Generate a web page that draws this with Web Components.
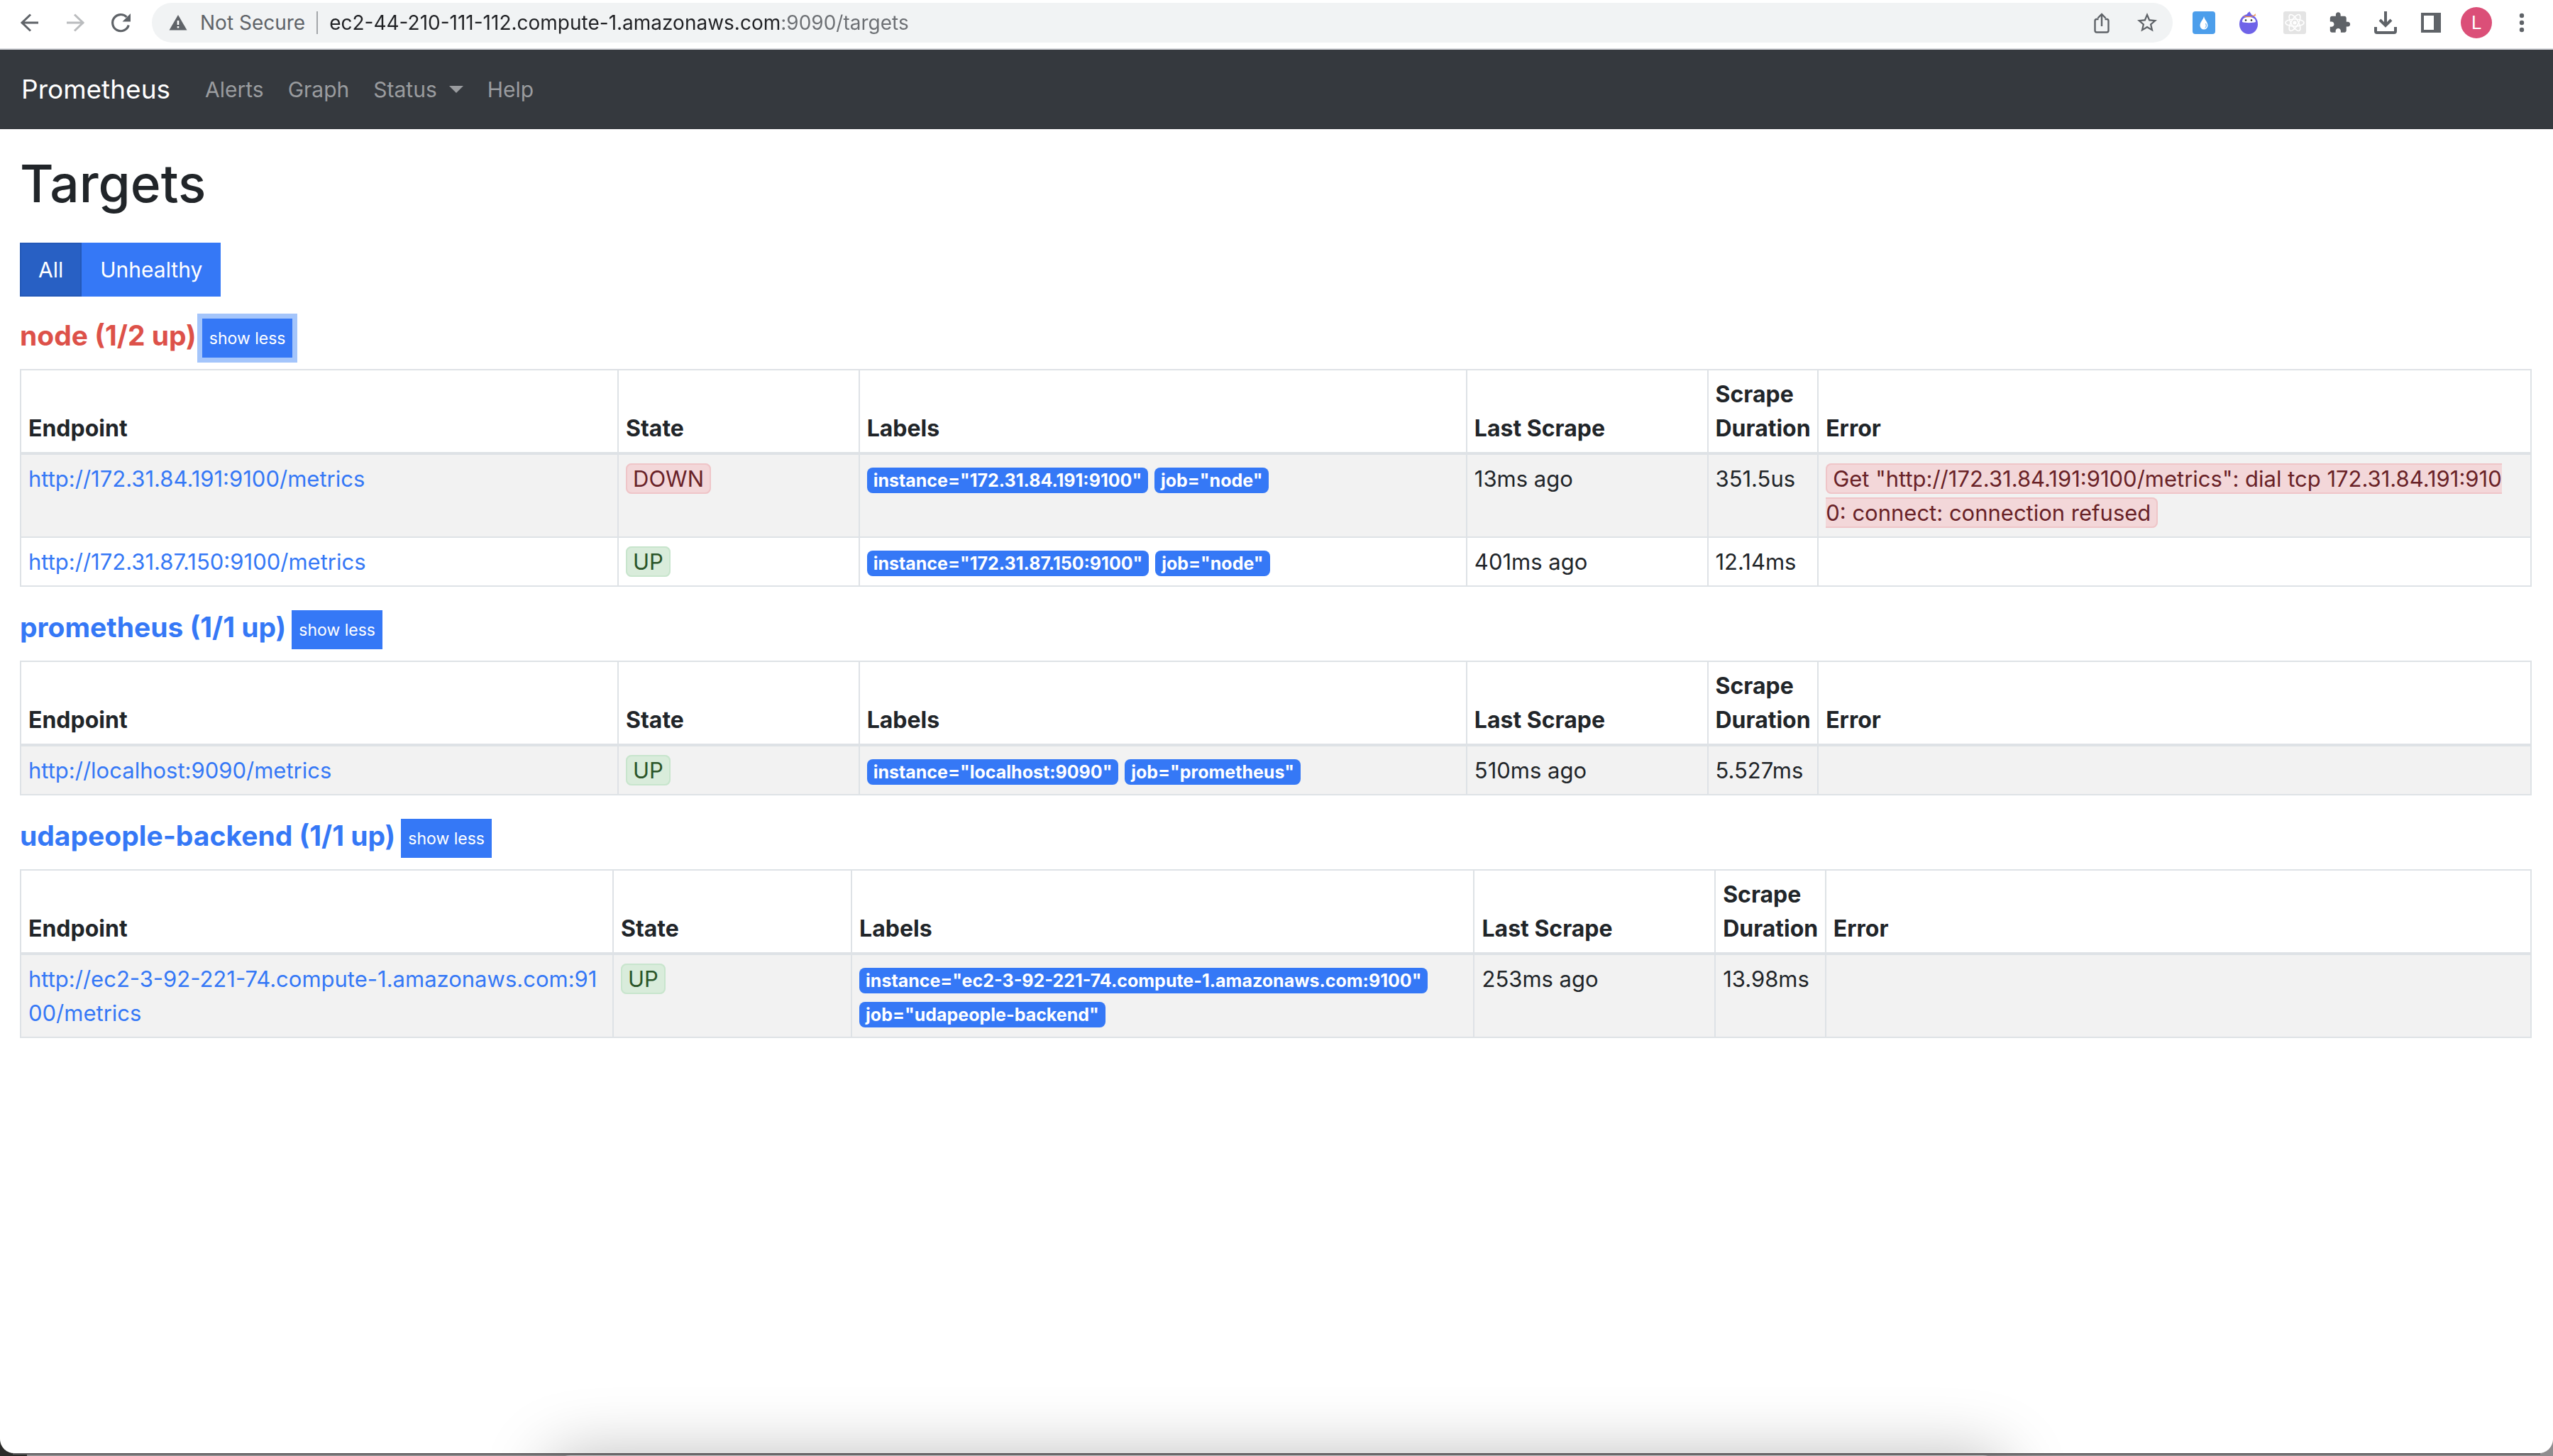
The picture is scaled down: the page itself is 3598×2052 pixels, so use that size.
<!DOCTYPE html>
<html lang="en">
<head>
<meta charset="utf-8">
<title>Prometheus Time Series Collection and Processing Server</title>
<style>
  body { margin: 0; background: #8f8d8f; color: #212529; font: 31px/48px Inter, "Liberation Sans", sans-serif; }
</style>
</head>
<body>
<desktop-stage>
  <browser-window>
    <browser-toolbar slot="toolbar"></browser-toolbar>
    <prom-navbar>
      <span slot="brand">Prometheus</span>
    </prom-navbar>
    <targets-page></targets-page>
  </browser-window>
</desktop-stage>

<script>
const define = (name, html, setup) => {
  const template = document.createElement('template');
  template.innerHTML = html;
  customElements.define(name, class extends HTMLElement {
    constructor() {
      super();
      this.attachShadow({ mode: 'open' }).append(template.content.cloneNode(true));
    }
    connectedCallback() { if (setup) setup(this, this.shadowRoot); }
  });
};

/* Desktop behind the window, with the dock peeking in at the bottom edge */
define('desktop-stage', `
  <style>
    :host { display: block; position: relative; box-sizing: border-box; min-height: 100vh; padding-bottom: 4px; overflow: hidden;
            background: linear-gradient(90deg, #2b2b29 38px, #8f8d8f 38px); }
    .edge { position: absolute; left: 18px; right: 18px; bottom: 2px; height: 2px; background: #5c5a5c; }
    .dock { position: absolute; left: 0; right: 0; bottom: -199px; width: 57%; height: 200px; margin: 0 auto;
            border-radius: 30px; background: #bdbdbd; box-shadow: 0 0 92px rgba(0, 0, 0, .27); }
  </style>
  <slot></slot>
  <div class="dock"></div>
  <div class="edge"></div>
`);

define('browser-window', `
  <style>
    :host { display: flex; flex-direction: column; min-height: calc(100vh - 4px); background: #fff;
            border-radius: 0 0 20px 20px; overflow: hidden; }
  </style>
  <slot name="toolbar"></slot>
  <slot></slot>
`);

const ICONS = {
  back: '<path d="M54 32H30.500M43 20.500L31 32l12 11.500" transform="translate(-10)" fill="none" stroke="currentColor" stroke-width="3"/>',
  forward: '<path d="M10 32h24M21 20.500L33 32 21 43.500" transform="translate(10)" fill="none" stroke="currentColor" stroke-width="3"/>',
  reload: '<path d="M43.300 35.500A11.600 11.600 0 1 1 40.500 24" fill="none" stroke="currentColor" stroke-width="3.200"/><path d="M46 19v11.500H34.500z" fill="currentColor"/>',
  share: '<path d="M27.500 27H25a2.500 2.500 0 0 0-2.500 2.500V43a2.500 2.500 0 0 0 2.500 2.500h14a2.500 2.500 0 0 0 2.500-2.500V29.500A2.500 2.500 0 0 0 39 27h-2.500M32 37V20M26.500 25.500L32 20l5.500 5.500" fill="none" stroke="currentColor" stroke-width="2.400"/>',
  star: '<path transform="translate(15.2 15.2) scale(1.4)" fill="currentColor" d="M22 9.240l-7.190-.620L12 2 9.190 8.630 2 9.240l5.460 4.730L5.820 21 12 17.270 18.180 21l-1.630-7.030L22 9.240zM12 15.400l-3.760 2.270 1-4.280-3.320-2.880 4.380-.380L12 6.100l1.710 4.040 4.380.380-3.320 2.880 1 4.280L12 15.400z"/>',
  drop: '<rect x="16" y="16" width="32" height="32" rx="4" fill="#4c9eeb"/><path d="M32 23c1 5 5.500 8 5.500 13a5.500 5.500 0 0 1-11 0c0-5 4.500-8 5.500-13z" fill="#fff"/><path d="M34.500 33c1.500 3 1 5-1 6.500" fill="none" stroke="#4c9eeb" stroke-width="1"/>',
  ninja: '<ellipse cx="31" cy="34" rx="13" ry="14" fill="#6f63e8"/><path d="M29 22c-1-3 1-4 4-6-1 2 2 2 2 6z" fill="#6f63e8"/><path d="M22 31c0-5 3-7 9-7s10 2 10 7c-4 1.500-15 1.500-19 0z" fill="#fff"/><circle cx="27" cy="28.500" r="1.300" fill="#333"/><circle cx="35" cy="28.500" r="1.300" fill="#333"/><path d="M24 22c4 1.500 11 1.500 15-1l2-2-.500 2.500 1.500.500-4 .500c-4 2.500-11 2-14 .500z" fill="#f08c3c"/>',
  react: '<rect x="16" y="16" width="32" height="32" rx="3" fill="#e4e4e4"/><g fill="none" stroke="#fff" stroke-width="1.600"><ellipse cx="32" cy="32" rx="13" ry="5"/><ellipse cx="32" cy="32" rx="13" ry="5" transform="rotate(60 32 32)"/><ellipse cx="32" cy="32" rx="13" ry="5" transform="rotate(120 32 32)"/></g><circle cx="32" cy="32" r="2.600" fill="#fff"/>',
  puzzle: '<path transform="translate(15.1 16) scale(1.35)" fill="currentColor" d="M20.500 11H19V7c0-1.100-.900-2-2-2h-4V3.500C13 2.120 11.880 1 10.500 1S8 2.120 8 3.500V5H4c-1.100 0-1.990.900-1.990 2v3.800H3.500c1.490 0 2.700 1.210 2.700 2.700s-1.210 2.700-2.700 2.700H2V20c0 1.100.900 2 2 2h3.800v-1.500c0-1.490 1.210-2.700 2.700-2.700 1.490 0 2.700 1.210 2.700 2.700V22H17c1.100 0 2-.900 2-2v-4h1.500c1.380 0 2.500-1.120 2.500-2.500S21.880 11 20.500 11z"/>',
  download: '<path d="M32 16v20M24 28l8 8 8-8M18 38v6a2 2 0 0 0 2 2h24a2 2 0 0 0 2-2v-6" fill="none" stroke="currentColor" stroke-width="4"/>',
  panel: '<path d="M18 18h28v28H18zM22 22v20h14V22z" fill="currentColor" fill-rule="evenodd"/>',
  menu: '<g fill="currentColor"><circle cx="32" cy="22" r="3.200"/><circle cx="32" cy="32" r="3.200"/><circle cx="32" cy="42" r="3.200"/></g>'
};

define('tool-button', `
  <style>
    :host { display: block; flex: none; color: #5f6368; }
    :host([dim]) { color: #babcbe; }
    button { display: block; width: 64px; height: 56px; padding: 0; border: 0; background: none; color: inherit; overflow: visible; }
    svg { display: block; width: 64px; height: 64px; margin-top: -4px; }
  </style>
  <button type="button"></button>
`, (host, root) => {
  const button = root.querySelector('button');
  button.setAttribute('aria-label', host.getAttribute('label'));
  button.innerHTML = '<svg viewBox="0 0 64 64" aria-hidden="true">' + ICONS[host.getAttribute('icon')] + '</svg>';
});

define('browser-toolbar', `
  <style>
    :host { display: flex; align-items: center; padding: 4px 12px 8px 10px; background: #fff; border-bottom: 2px solid #dadce0; }
    .omnibox { display: flex; align-items: center; flex: 1; min-width: 0; height: 56px; margin: 0 12px; padding: 0 4px 0 24px;
               box-sizing: border-box; border-radius: 28px; background: #f1f3f4; font-size: 28px; line-height: 56px; }
    .warn { width: 26px; height: 22px; flex: none; }
    label { margin: 0 16px 0 18px; color: #5f6368; }
    .rule { width: 2px; height: 32px; background: #a3a6a9; }
    input { flex: 1; min-width: 0; height: 56px; margin: 0 16px; padding: 0; border: 0; font: inherit; line-height: 56px;
            color: transparent; background: linear-gradient(90deg, #202124 636px, #6c6f73 636px); -webkit-background-clip: text; background-clip: text; }
    .who { display: grid; place-items: center; width: 44px; height: 44px; margin: 0 10px; padding: 0; border: 0; border-radius: 50%;
           background: #db4f78; color: #fff; font: 26px/44px Roboto, sans-serif; flex: none; }
  </style>
  <tool-button icon="back" label="Back"></tool-button>
  <tool-button icon="forward" label="Forward" dim></tool-button>
  <tool-button icon="reload" label="Reload"></tool-button>
  <div class="omnibox">
    <svg class="warn" viewBox="0 0 26 22" aria-hidden="true"><path d="M13 0l12.500 21.500H.500z" fill="#5f6368"/><path d="M11.700 8h2.600v6h-2.600zm0 8h2.600v2.600h-2.600z" fill="#fff"/></svg>
    <label for="url">Not Secure</label>
    <span class="rule"></span>
    <input id="url" type="text" value="ec2-44-210-111-112.compute-1.amazonaws.com:9090/targets">
    <tool-button icon="share" label="Share"></tool-button>
    <tool-button icon="star" label="Bookmark"></tool-button>
  </div>
  <tool-button icon="drop" label="Drop extension"></tool-button>
  <tool-button icon="ninja" label="Ninja extension"></tool-button>
  <tool-button icon="react" label="React extension"></tool-button>
  <tool-button icon="puzzle" label="Extensions"></tool-button>
  <tool-button icon="download" label="Downloads"></tool-button>
  <tool-button icon="panel" label="Side panel"></tool-button>
  <button class="who" type="button">L</button>
  <tool-button icon="menu" label="Menu"></tool-button>
`);

define('prom-navbar', `
  <style>
    :host { display: block; background: #35393e; }
    nav { display: flex; align-items: center; padding: 16px 30px; height: 80px; font-size: 30px; }
    a, button { color: #9a9c9f; text-decoration: none; }
    .brand { margin-right: 32px; color: #fff; font-size: 37px; }
    ul { display: flex; margin: 0; padding: 0; list-style: none; }
    li { padding: 0 17px; }
    button { display: flex; align-items: center; gap: 17px; padding: 0; border: 0; background: none; font: inherit; }
    button::after { content: ""; border: 10px solid transparent; border-top-color: currentColor; border-bottom: 0; }
  </style>
  <nav>
    <a class="brand" href="#"><slot name="brand"></slot></a>
    <ul>
      <li><a href="#">Alerts</a></li>
      <li><a href="#">Graph</a></li>
      <li><button type="button" aria-haspopup="true">Status</button></li>
      <li><a href="#">Help</a></li>
    </ul>
  </nav>
`);

define('filter-group', `
  <style>
    :host { display: flex; }
    button { height: 76px; padding: 0 24px; border: 2px solid #3578f6; background: #3578f6; color: #fff; font: inherit; font-size: 30px; }
    button[aria-pressed="true"] { background: #2860c4; border-color: #2459b8; }
  </style>
  <button type="button" aria-pressed="true">All</button>
  <button type="button" aria-pressed="false">Unhealthy</button>
`);

define('health-badge', `
  <style>
    :host { display: inline; }
    span { padding: 1px 8px; border: 2px solid #c8e5cd; border-radius: 8px; background: #d9ecdb; color: #2b5529; }
    :host([kind="down"]) span { border-color: #efc5c8; background: #f3d7d9; color: #692227; }
  </style>
  <span><slot></slot></span>
`);

define('label-badge', `
  <style>
    :host { display: inline-block; padding: 6px 9px; border-radius: 8px; background: #3578f6; color: #fff;
            font-size: 25px; font-weight: 700; line-height: 24px; white-space: nowrap; }
  </style>
  <slot></slot>
`);

const POOLS = [
  { name: 'node', up: 1, total: 2, focused: true, targets: [
    { url: 'http://172.31.84.191:9100/metrics', state: 'DOWN', labels: { instance: '172.31.84.191:9100', job: 'node' }, last: '13ms ago', took: '351.5us',
      error: 'Get "http://172.31.84.191:9100/metrics": dial tcp 172.31.84.191:9100: connect: connection refused' },
    { url: 'http://172.31.87.150:9100/metrics', state: 'UP', labels: { instance: '172.31.87.150:9100', job: 'node' }, last: '401ms ago', took: '12.14ms' } ] },
  { name: 'prometheus', up: 1, total: 1, targets: [
    { url: 'http://localhost:9090/metrics', state: 'UP', labels: { instance: 'localhost:9090', job: 'prometheus' }, last: '510ms ago', took: '5.527ms' } ] },
  { name: 'udapeople-backend', up: 1, total: 1, wide: true, targets: [
    { url: 'http://ec2-3-92-221-74.compute-1.amazonaws.com:9100/metrics', state: 'UP', labels: { instance: 'ec2-3-92-221-74.compute-1.amazonaws.com:9100', job: 'udapeople-backend' }, last: '253ms ago', took: '13.98ms' } ] }
];

define('target-pool', `
  <style>
    :host { display: block; }
    header { display: flex; align-items: flex-start; gap: 8px; height: 55px; margin-bottom: 16px; }
    h3 { margin: 0; font-size: 39px; line-height: 48px; font-weight: 700; }
    h3 a { color: #3578f6; text-decoration: none; }
    h3.bad a { color: #dd5149; }
    header button { height: 55px; padding: 0 8px; border: 2px solid #3578f6; background: #3578f6; color: #fff; font: inherit; font-size: 23px; }
    header button.focused { box-shadow: 0 0 0 7px #a4c5fb; }
    table { width: 100%; table-layout: fixed; border-collapse: collapse; }
    th, td { padding: 10px 10px 9px; border: 2px solid #dee2e6; text-align: left; vertical-align: top; }
    th { padding-right: 8px; vertical-align: bottom; border-bottom-width: 4px; font-size: 32px; font-weight: 700; }
    td { word-break: break-all; }
    td:last-child { padding-right: 30px; }
    td a { color: #3578f6; text-decoration: none; }
    tbody tr:nth-child(odd) { background: #f2f2f2; }
    .endpoint { width: 23.8%; } .state { width: 9.6%; } .labels { width: 24.2%; } .last { width: 9.6%; } .took { width: 4.4%; }
    .wide .endpoint { width: 23.6%; } .wide .state { width: 9.5%; } .wide .labels { width: 24.8%; }
  </style>
  <header><h3><a href="#"></a></h3><button type="button">show less</button></header>
  <table>
    <colgroup><col class="endpoint"><col class="state"><col class="labels"><col class="last"><col class="took"><col></colgroup>
    <thead><tr><th>Endpoint</th><th>State</th><th>Labels</th><th>Last Scrape</th><th>Scrape Duration</th><th>Error</th></tr></thead>
    <tbody></tbody>
  </table>
`, (host, root) => {
  const pool = POOLS.find(p => p.name === host.getAttribute('name'));
  root.querySelector('h3').classList.toggle('bad', pool.up < pool.total);
  root.querySelector('h3 a').textContent = pool.name + ' (' + pool.up + '/' + pool.total + ' up)';
  root.querySelector('header button').classList.toggle('focused', !!pool.focused);
  root.querySelector('table').classList.toggle('wide', !!pool.wide);
  root.querySelector('tbody').innerHTML = pool.targets.map(t => '<tr><td><a href="#">' + t.url + '</a></td>'
    + '<td><health-badge kind="' + t.state.toLowerCase() + '">' + t.state + '</health-badge></td>'
    + '<td>' + Object.entries(t.labels).map(([k, v]) => '<label-badge>' + k + '="' + v + '"</label-badge>').join(' ') + '</td>'
    + '<td>' + t.last + '</td><td>' + t.took + '</td>'
    + '<td>' + (t.error ? '<health-badge kind="down">' + t.error + '</health-badge>' : '') + '</td></tr>').join('');
});

define('targets-page', `
  <style>
    :host { display: block; padding: 29px 30px 0 28px; }
    h1 { margin: 0 0 35px; font-size: 73px; line-height: 96px; font-weight: 500; }
    .pools { display: flex; flex-direction: column; gap: 33px; margin-top: 31px; }
  </style>
  <h1>Targets</h1>
  <filter-group></filter-group>
  <div class="pools">
    <target-pool name="node"></target-pool>
    <target-pool name="prometheus"></target-pool>
    <target-pool name="udapeople-backend"></target-pool>
  </div>
`);
</script>
</body>
</html>
